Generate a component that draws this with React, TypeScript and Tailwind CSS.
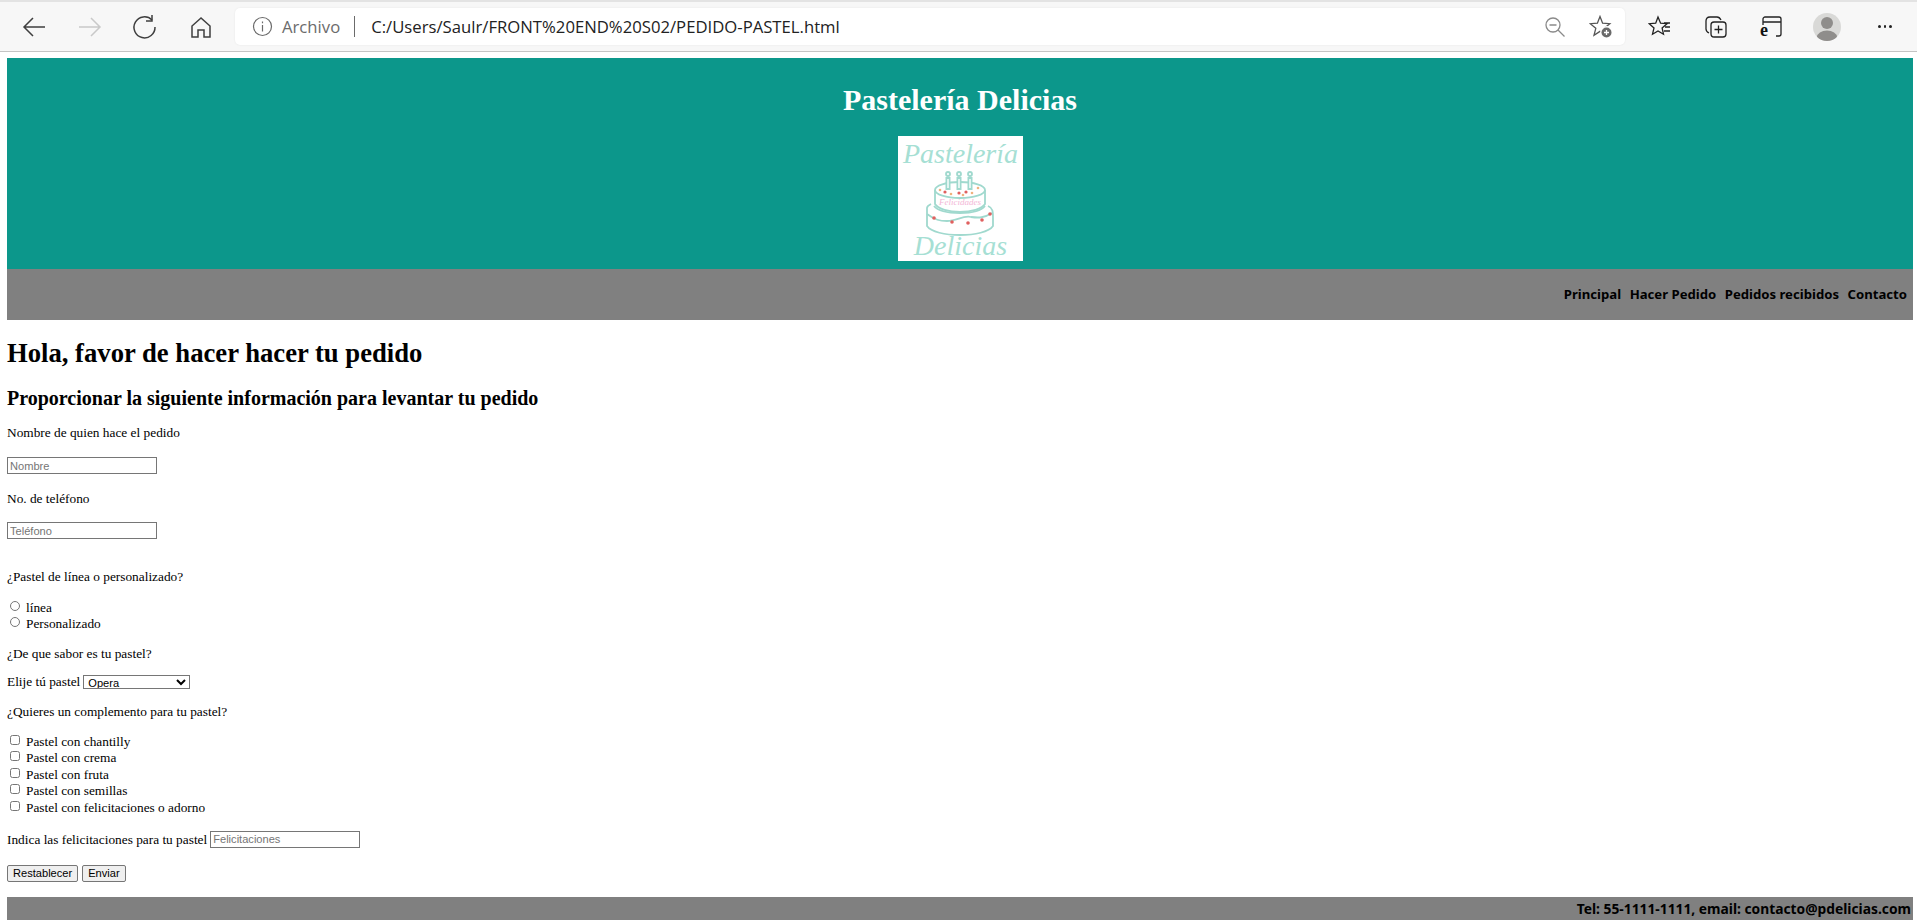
const stroke = "#3f3f3f";

function Toolbar() {
  return (
    <div className="flex h-[52px] items-center bg-[#f7f7f7] border-b border-[#c4c4c4] border-t-2 border-t-[#e3e3e3] font-['Open_Sans',sans-serif]">
      <div className="flex w-[235px] shrink-0 items-center pl-[20px] gap-[27.5px]">
        <svg width="28" height="28" viewBox="0 0 28 28" fill="none" stroke={stroke} strokeWidth="1.5">
          <path d="M25 14H4M13 5l-9 9 9 9" />
        </svg>
        <svg width="28" height="28" viewBox="0 0 28 28" fill="none" stroke="#c9c9c9" strokeWidth="1.5">
          <path d="M3 14h21M15 5l9 9-9 9" />
        </svg>
        <svg width="28" height="28" viewBox="0 0 28 28" fill="none" stroke={stroke} strokeWidth="1.5">
          <path d="M21 7a10.5 10.5 0 1 0 3 7" />
          <path d="M21 2v6h-6" />
        </svg>
        <svg width="28" height="28" viewBox="0 0 28 28" fill="none" stroke={stroke} strokeWidth="1.5">
          <path d="M14 5l-9 8v11h6v-7h6v7h6V13z" />
        </svg>
      </div>
      <div className="flex h-[37px] w-[1390px] shrink-0 items-center rounded-[5px] bg-white pl-[17px] pr-[12px] shadow-[0_0_2px_rgba(0,0,0,0.08)]">
        <svg width="21" height="21" viewBox="0 0 21 21" fill="none" stroke="#6a6a6a" strokeWidth="1.2">
          <circle cx="10.5" cy="10.5" r="9" />
          <path d="M10.5 9v6.5M10.5 5.6v1.6" />
        </svg>
        <span className="ml-[9px] text-[16.7px] text-[#6b6b6b]">Archivo</span>
        <span className="ml-[14px] h-[21px] w-px bg-[#6b6b6b]" />
        <span className="ml-[16px] text-[16.7px] text-[#222]">C:/Users/Saulr/FRONT%20END%20S02/PEDIDO-PASTEL.html</span>
        <div className="ml-auto flex items-center gap-[23px]">
          <svg width="22" height="22" viewBox="0 0 22 22" fill="none" stroke="#8a8a8a" strokeWidth="1.3">
            <circle cx="9" cy="9" r="7" />
            <path d="M5.5 9h7M14 14l6.5 6.5" />
          </svg>
          <svg width="24" height="24" viewBox="0 0 24 24" fill="none" stroke="#555" strokeWidth="1.3">
            <path d="M11 1.5l2.6 6.7 7.2.5-5.6 4.6 1.8 7-6-3.9-6 3.9 1.8-7L1.2 8.7l7.2-.5z" />
            <circle cx="17.5" cy="17.5" r="6.5" fill="#fff" stroke="none" />
            <circle cx="17.5" cy="17.5" r="5" fill="#6a6a6a" stroke="none" />
            <path d="M15 17.5h5M17.5 15v5" stroke="#fff" />
          </svg>
        </div>
      </div>
      <div className="flex flex-1 items-center pl-[23px]">
        <svg width="24" height="24" viewBox="0 0 24 24" fill="none" stroke="#222" strokeWidth="1.3">
          <path d="M10 2l2.6 6.2 6.4.5-4.9 4.2 1.4 6.3-5.5-3.3-5.5 3.3 1.5-6.3L1.2 8.7l6.5-.5z" />
          <path d="M16 8h6M17 12h5M16 16h6" />
        </svg>
        <svg className="ml-[32px]" width="24" height="24" viewBox="0 0 24 24" fill="none" stroke="#222" strokeWidth="1.3">
          <path d="M5 18c-2-1-3-2-3-4V6c0-2 1-4 4-4h7c2 0 3 1 4 3" />
          <rect x="7" y="7" width="15" height="15" rx="3" />
          <path d="M14.5 10.5v8M10.5 14.5h8" />
        </svg>
        <svg className="ml-[31px]" width="24" height="24" viewBox="0 0 24 24" fill="none" stroke="#222" strokeWidth="1.3">
          <path d="M4 10V4c0-1 1-2 2-2h14c1 0 2 1 2 2v15c0 1-1 2-2 2h-3M4 7h18" />
          <text x="1" y="21" fontSize="18" fontWeight="700" fill="#111" stroke="none" fontFamily="'Liberation Serif', serif">e</text>
        </svg>
        <div className="ml-[30px] flex h-[28px] w-[28px] items-start justify-center overflow-hidden rounded-full bg-[#d9d9d7]">
          <svg width="28" height="28" viewBox="0 0 28 28" fill="#8f8d8b">
            <circle cx="14" cy="10" r="6" />
            <ellipse cx="14" cy="24" rx="10" ry="6.5" />
          </svg>
        </div>
        <div className="ml-[37px] flex gap-[3px]">
          <span className="h-[2.5px] w-[2.5px] rounded-full bg-[#222]" />
          <span className="h-[2.5px] w-[2.5px] rounded-full bg-[#222]" />
          <span className="h-[2.5px] w-[2.5px] rounded-full bg-[#222]" />
        </div>
      </div>
    </div>
  );
}

function CakeLogo() {
  return (
    <svg className="mt-[19px] block" width="125" height="125" viewBox="0 0 125 125" fill="none">
      <rect width="125" height="125" fill="#fff" />
      <text x="62.5" y="27" textAnchor="middle" fontSize="28" fontStyle="italic" fill="#a6dfd4" fontFamily="'Liberation Serif', serif">Pastelería</text>
      <g stroke="#a0d9ce" strokeWidth="1.8">
        <circle cx="50" cy="38" r="2" />
        <circle cx="61" cy="38" r="2" />
        <circle cx="72" cy="38" r="2" />
        <path d="M36 70c4 5 15 7 26 7s21-2 25-7" />
        <path d="M29 72c0 0 0 2 0 10v8c4 6 18 9 33 9s29-3 33-9v-8c0-6 0-10-5-12" />
        <path d="M33 68c-2 1-4 2-4 4" />
        <ellipse cx="62" cy="54" rx="25" ry="8" fill="#fff" />
        <path d="M37 54v14c3 5 14 8 25 8s22-3 25-8V54" />
        <path d="M29 78c8 6 13 7 20 7 10 0 16-6 24-4 8 1 13 1 21-4" />
        <path d="M50 41v13M61 41v13M72 41v13" strokeWidth="5" />
        <path d="M50 43v9M61 43v9M72 43v9" stroke="#e3f5f1" strokeWidth="2" />
      </g>
      <g fill="#e0605f">
        <circle cx="47" cy="56" r="1.6" />
        <circle cx="61" cy="57" r="1.6" />
        <circle cx="68" cy="56" r="1.6" />
        <circle cx="36" cy="82" r="1.8" />
        <circle cx="54" cy="86" r="1.8" />
        <circle cx="70" cy="87" r="1.8" />
        <circle cx="84" cy="84" r="1.8" />
        <circle cx="92" cy="78" r="1.8" />
      </g>
      <g fill="#efb27d">
        <circle cx="42" cy="54" r="1.3" />
        <circle cx="53" cy="58" r="1.3" />
        <circle cx="65" cy="59" r="1.3" />
        <circle cx="74" cy="57" r="1.3" />
        <circle cx="80" cy="52" r="1.3" />
      </g>
      <text x="62" y="69" textAnchor="middle" fontSize="9" fontStyle="italic" fill="#f3b6d6" fontFamily="'Liberation Serif', serif">Felicidades</text>
      <text x="62.5" y="119" textAnchor="middle" fontSize="28" fontStyle="italic" fill="#a6dfd4" fontFamily="'Liberation Serif', serif">Delicias</text>
    </svg>
  );
}

const complementos = [
  "Pastel con chantilly",
  "Pastel con crema",
  "Pastel con fruta",
  "Pastel con semillas",
  "Pastel con felicitaciones o adorno",
];

const controlText = "font-['Liberation_Sans',sans-serif] text-[11.1px]";
const inputCls = `block h-[17px] border border-[#767676] px-[2px] placeholder:text-[#757575] ${controlText}`;
const btnCls = `h-[17px] rounded-[2px] border border-[#767676] bg-[#efefef] px-[5px] text-black ${controlText}`;

export default function App() {
  return (
    <div className="min-h-[923px] bg-white font-['Liberation_Serif',serif] text-[13.33px] leading-[15px] text-black">
      <Toolbar />
      <div className="pl-[7px] pr-[4px] pt-[6px]">
        <header className="flex h-[211px] flex-col items-center bg-[#0c978b] pt-[25px]">
          <h1 className="text-[30px] leading-[34px] font-bold text-white">Pastelería Delicias</h1>
          <CakeLogo />
        </header>
        <nav className="flex h-[51px] items-center justify-end gap-[8.5px] bg-[#808080] pr-[6px] font-['Noto_Sans',sans-serif] text-[13.15px] font-bold">
          <a>Principal</a>
          <a>Hacer Pedido</a>
          <a>Pedidos recibidos</a>
          <a>Contacto</a>
        </nav>
        <h2 className="mt-[18px] text-[26.67px] leading-[30px] font-bold">Hola, favor de hacer hacer tu pedido</h2>
        <h3 className="mt-[19px] text-[20px] leading-[22px] font-bold">Proporcionar la siguiente información para levantar tu pedido</h3>
        <p className="mt-[16px]">Nombre de quien hace el pedido</p>
        <input className={`mt-[17px] w-[150px] ${inputCls}`} placeholder="Nombre" />
        <p className="mt-[17px]">No. de teléfono</p>
        <input className={`mt-[16px] w-[150px] ${inputCls}`} placeholder="Teléfono" />
        <p className="mt-[30px]">¿Pastel de línea o personalizado?</p>
        <div className="mt-[15px] flex flex-col">
          <label className="flex h-[16px] items-center"><input type="radio" name="tipo" className="mx-[3px] -mt-[3px] h-[10px] w-[10px]" /><span className="ml-[3px]">línea</span></label>
          <label className="flex h-[16px] items-center"><input type="radio" name="tipo" className="mx-[3px] -mt-[3px] h-[10px] w-[10px]" /><span className="ml-[3px]">Personalizado</span></label>
        </div>
        <p className="mt-[15px]">¿De que sabor es tu pastel?</p>
        <div className="mt-[13px] flex items-center gap-[3px]">
          <span>Elije tú pastel</span>
          <select className={`h-[14px] w-[107px] appearance-auto border border-[#767676] bg-white ${controlText}`}>
            <option>Opera</option>
          </select>
        </div>
        <p className="mt-[15px]">¿Quieres un complemento para tu pastel?</p>
        <div className="mt-[14px] flex flex-col">
          {complementos.map((c) => (
            <label key={c} className="flex h-[16.5px] items-center">
              <input type="checkbox" className="mx-[3px] -mt-[3px] h-[10px] w-[10px]" />
              <span className="ml-[3px]">{c}</span>
            </label>
          ))}
        </div>
        <div className="mt-[15px] flex items-center gap-[3px]">
          <span>Indica las felicitaciones para tu pastel</span>
          <input className={`w-[150px] ${inputCls}`} placeholder="Felicitaciones" />
        </div>
        <div className="mt-[17px] flex gap-[4px]">
          <button className={btnCls}>Restablecer</button>
          <button className={btnCls}>Enviar</button>
        </div>
        <footer className="mt-[15px] flex h-[23px] items-center justify-end bg-[#808080] pr-[2px] font-['Noto_Sans',sans-serif] text-[13.8px] font-bold">
          Tel: 55-1111-1111, email: contacto@pdelicias.com
        </footer>
      </div>
    </div>
  );
}
